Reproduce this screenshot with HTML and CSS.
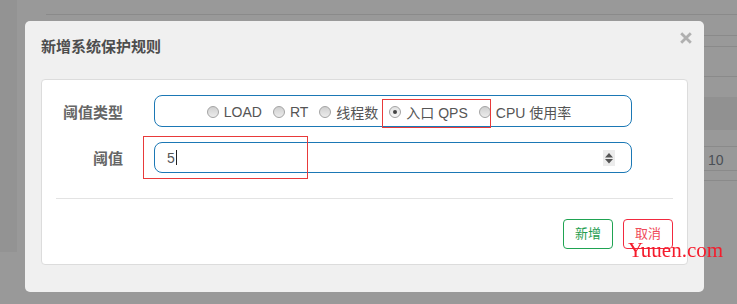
FILE: index.html
```html
<!DOCTYPE html>
<html lang="zh-CN">
<head>
<meta charset="UTF-8">
<meta name="viewport" content="width=device-width, initial-scale=1.0">
<title>新增系统保护规则</title>
<link rel="stylesheet" href="styles.css">
</head>
<body>
    <!-- pagina dietro la modale -->
    <div class="page">
        <div class="sidebar"></div>
        <div class="main">
            <div class="line r-top"></div>
            <div class="line r-a"></div>
            <div class="line r-b"></div>
            <div class="line r-c"></div>
            <div class="r-gap"></div>
            <div class="r-band"></div>
            <div class="line r-d"></div>
            <div class="line r-row"><span class="cell">10</span></div>
            <div class="line r-e"></div>
        </div>
    </div>

    <div class="overlay">
        <div class="dialog">
            <h4 class="dialog-title">新增系统保护规则</h4>
            <button class="close" aria-label="关闭">
                <svg width="12" height="12" viewBox="0 0 12 12"><path d="M1.2 1.2 L10.8 10.8 M10.8 1.2 L1.2 10.8" stroke="#b0b0b0" stroke-width="2.8" fill="none"/></svg>
            </button>
            <div class="panel">
                <div class="form-row">
                    <label class="form-label">阈值类型</label>
                    <div class="field radio-group">
                        <span class="radio-item"><span class="dot"></span>LOAD</span>
                        <span class="radio-item"><span class="dot"></span>RT</span>
                        <span class="radio-item"><span class="dot"></span>线程数</span>
                        <span class="radio-item"><span class="dot checked"></span>入口 QPS</span>
                        <span class="radio-item"><span class="dot"></span>CPU 使用率</span>
                    </div>
                </div>
                <div class="form-row">
                    <label class="form-label">阈值</label>
                    <div class="field input-field">
                        <span class="value">5</span><span class="caret"></span>
                        <span class="spinner">
                            <svg width="12" height="16" viewBox="0 0 12 16"><path d="M6 3 L10 7.5 L2 7.5 Z M2 9 L10 9 L6 13.5 Z" fill="#555"/></svg>
                        </span>
                    </div>
                </div>
                <hr class="divider">
                <div class="actions">
                    <button class="btn btn-add">新增</button>
                    <button class="btn btn-cancel">取消</button>
                </div>
            </div>
        </div>
    </div>

    <div class="mark mark-type"></div>
    <div class="mark mark-value"></div>
    <div class="watermark">Yuuen.com</div>
</body>
</html>
```

FILE: styles.css
```css
body {
    margin: 0;
    padding: 0;
    width: 737px;
    height: 304px;
    overflow: hidden;
    background-color: #999999;
    font-family: "Liberation Sans", "Noto Sans CJK SC", sans-serif;
}

/* pagina sotto la modale, gia' scurita */
.page {
    display: flex;
    height: 304px;
}

.sidebar {
    width: 17px;
    height: 252px;
    background-color: #939393;
}

.main {
    flex: 1;
    padding-left: 29px;
}

.line {
    border-bottom: 1px solid #8a8a8a;
}

.r-top { height: 14px; }
.r-a { height: 20px; }
.r-b { height: 10px; }
.r-c { height: 29px; }
.r-gap { height: 20px; }
.r-band { height: 33px; background-color: #919191; }
.r-d { height: 16px; }
.r-row { height: 23px; position: relative; }
.r-e { height: 9px; }

.cell {
    position: absolute;
    left: 662px;
    top: 5px;
    font-size: 14px;
    color: #4a4f56;
}

.overlay {
    position: fixed;
    left: 0;
    top: 0;
    width: 100%;
    height: 100%;
}

.dialog {
    position: relative;
    box-sizing: border-box;
    margin: 21px 0 0 25px;
    width: 679px;
    height: 271px;
    padding: 16px 16px 0 16px;
    background-color: #f0f0f0;
    border-radius: 5px;
}

.dialog-title {
    margin: 0 0 22px 0;
    font-size: 15px;
    line-height: 20px;
    font-weight: bold;
    color: #4d4d4d;
}

.close {
    position: absolute;
    top: 11px;
    right: 12px;
    padding: 0;
    border: 0;
    background: none;
    width: 12px;
    height: 12px;
}

.close svg {
    display: block;
}

.panel {
    box-sizing: border-box;
    height: 186px;
    padding: 15px 14px 0 14px;
    background-color: #fff;
    border: 1px solid #dcdcdc;
    border-radius: 4px;
}

.form-row {
    display: grid;
    grid-template-columns: 67px 478px;
    column-gap: 31px;
    align-items: center;
    margin-bottom: 15px;
}

.form-label {
    text-align: right;
    font-size: 15px;
    font-weight: bold;
    color: #666;
}

.field {
    box-sizing: border-box;
    height: 32px;
    border: 1px solid #1b78b5;
    border-radius: 8px;
}

.radio-group {
    display: flex;
    justify-content: center;
    align-items: center;
    gap: 11px;
    padding: 2px 8px 0 0;
    font-size: 14px;
    color: #555;
}

.radio-item {
    display: inline-flex;
    align-items: center;
}

.dot {
    box-sizing: border-box;
    width: 12px;
    height: 12px;
    margin-right: 5px;
    border: 1px solid #a3a3a3;
    border-radius: 50%;
    background: linear-gradient(#cfcfcf, #ececec);
    position: relative;
}

.dot.checked {
    background: linear-gradient(#e2e2e2, #f6f6f6);
}

.dot.checked::after {
    content: "";
    position: absolute;
    left: 3px;
    top: 3px;
    width: 4px;
    height: 4px;
    border-radius: 50%;
    background-color: #444;
}

.input-field {
    display: flex;
    align-items: center;
    padding-left: 12px;
    height: 31px;
    font-size: 14px;
    color: #555;
}

.caret {
    width: 1px;
    height: 15px;
    margin-left: 1px;
    background-color: #222;
}

.spinner {
    margin-left: auto;
    margin-right: 16px;
    width: 12px;
    height: 16px;
    background-color: #ececec;
}

.spinner svg {
    display: block;
}

.divider {
    margin: 25px 0 20px 0;
    border: 0;
    border-top: 1px solid #e3e3e3;
}

.actions {
    display: flex;
    justify-content: flex-end;
    gap: 10px;
}

.btn {
    width: 50px;
    height: 30px;
    padding: 0 0 1px 0;
    font-size: 13px;
    line-height: 13px;
    font-family: "Liberation Sans", "Noto Sans CJK SC", sans-serif;
    background-color: #fff;
    border-radius: 4px;
}

.btn-add {
    border: 1px solid #1fa352;
    color: #1f9e50;
}

.btn-cancel {
    border: 1px solid #f2293f;
    color: #ef4a5a;
}

/* riquadri rossi di evidenza */
.mark {
    position: absolute;
    border: 1px solid #e83a3a;
}

.mark-type {
    left: 382px;
    top: 99px;
    width: 107px;
    height: 27px;
}

.mark-value {
    left: 143px;
    top: 136px;
    width: 163px;
    height: 41px;
}

.watermark {
    position: absolute;
    left: 628px;
    top: 243px;
    font-family: "Liberation Serif", serif;
    font-size: 21px;
    line-height: 14px;
    color: #f51c2c;
}
```
